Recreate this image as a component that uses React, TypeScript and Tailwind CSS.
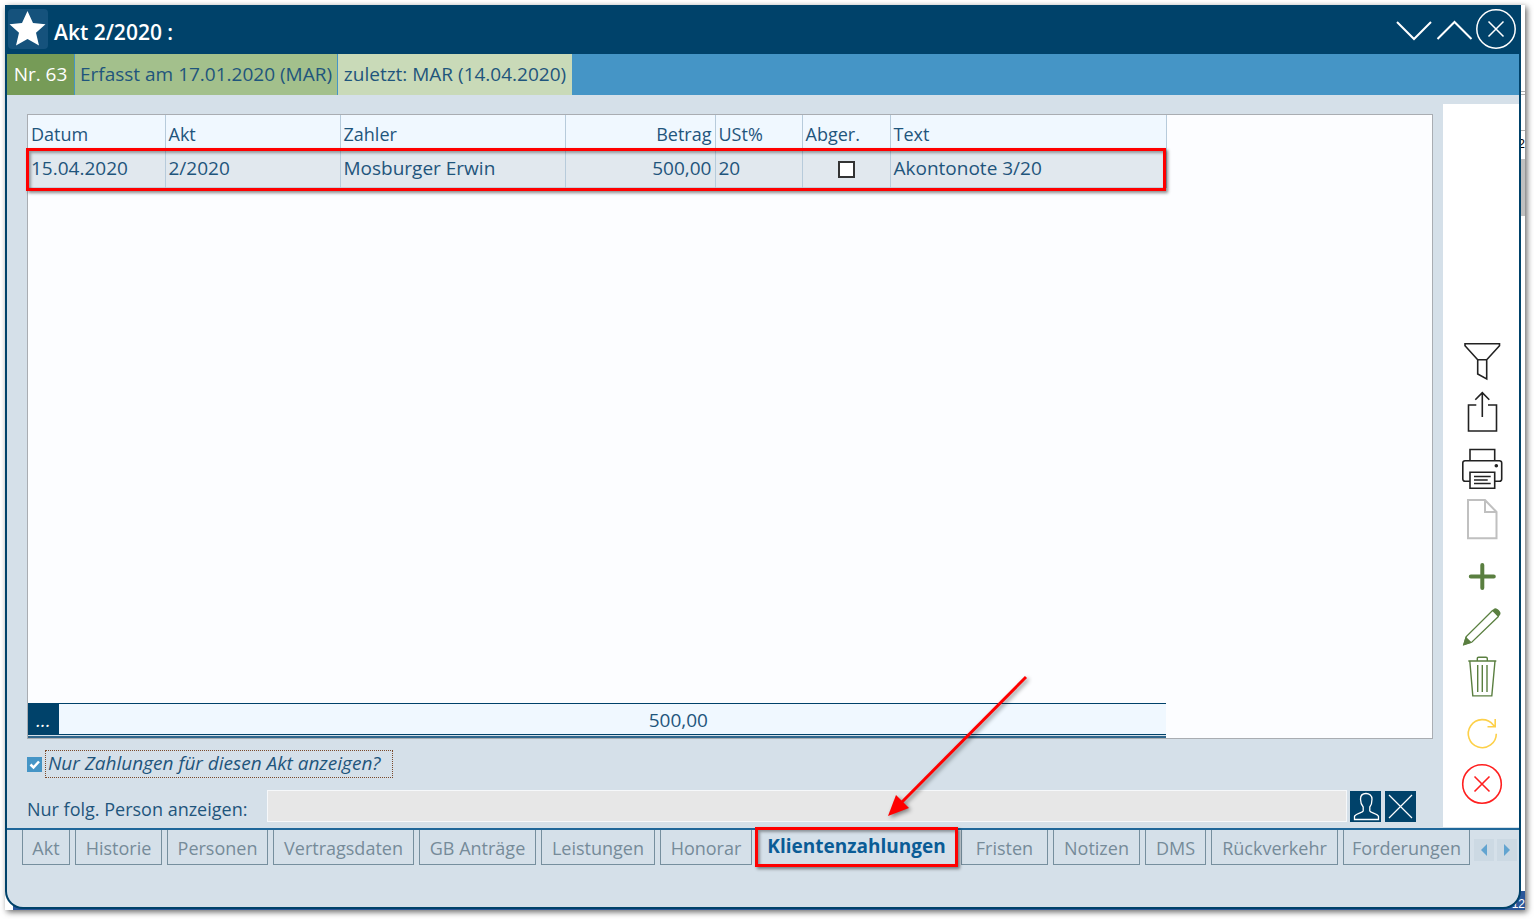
/**
 * Fenster "Akt" mit dem Register Klientenzahlungen
 *
 * Aufbau:
 * - Titelleiste und Infoleiste
 * - Tabelle der Zahlungen mit Summenzeile
 * - Filter (nur dieser Akt / nur folgende Person)
 * - Symbolleiste rechts und Register unten
 */

import React from 'react';

interface IconProps {
  className?: string;
  children: React.ReactNode;
}

// Gemeinsamer Rahmen für alle Symbole der rechten Leiste
const ToolIcon: React.FC<IconProps> = ({ className, children }) => (
  <svg
    viewBox="0 0 40 40"
    fill="none"
    stroke="currentColor"
    strokeWidth="1.6"
    className={`size-10 overflow-visible ${className ?? ''}`}
  >
    {children}
  </svg>
);

interface Tool {
  label: string;
  color: string;
  icon: React.ReactNode;
}

const toolGroups: Tool[][] = [
  [
    {
      label: 'Filter',
      color: 'text-[#222222]',
      icon: <path d="M3 2.7h34.5v2L24.7 18.7V38l-9-5V18.7L3 4.7zM15.7 18.7h9" />,
    },
    {
      label: 'Exportieren',
      color: 'text-[#222222]',
      icon: <path d="M14.3 14H6.5v26h28V14H26M20.3 26V2M13.3 8.7l7-7 7 7" />,
    },
  ],
  [
    {
      label: 'Drucken',
      color: 'text-[#222222]',
      icon: (
        <>
          <path d="M8 11.7V.5h24.7v11.2M8 32.3H3a2.2 2.2 0 0 1-2.2-2.2V14A2.2 2.2 0 0 1 3 11.7h34.5a2.2 2.2 0 0 1 2.2 2.3v16a2.2 2.2 0 0 1-2.2 2.3h-4.8M8 23.3h24.7v16H8z" />
          <path d="M12 27.5h16.7M12 31h13.7M12 34.5h16.7" />
          <circle cx="34.3" cy="16.7" r="1" fill="currentColor" />
        </>
      ),
    },
    {
      label: 'Neues Dokument',
      color: 'text-[#c0c0c0]',
      icon: <path strokeWidth="2" d="M6 1h17l11.5 12v26.2H6zM23 1v12h11.5" />,
    },
  ],
  [
    {
      label: 'Neu',
      color: 'text-[#5a7f40]',
      icon: <path strokeWidth="4" strokeLinecap="round" d="M20.3 8v23M8.8 19.5h23" />,
    },
    {
      label: 'Bearbeiten',
      color: 'text-[#5a7f40]',
      icon: (
        <>
          <path strokeWidth="1.3" d="M30.8 3.3 4.3 29.5 2 37.3l8-2.3L36.7 9.2" />
          <path fill="currentColor" d="m4 31-2 6.5 6.5-2zM32.2 2.5c1.8-1.8 7 2.7 5 5.3l-1 1-5.2-5.2z" />
        </>
      ),
    },
    {
      label: 'Löschen',
      color: 'text-[#5a7f40]',
      icon: (
        <path
          strokeWidth="1.4"
          d="M6.3 4h28M15.3 4V1.5q0-1.3 1.3-1.3h7.4q1.3 0 1.3 1.3V4M7.8 4l3 34.9h19L33 4M15.7 8v27M20.3 8v27M25 8v27"
        />
      ),
    },
  ],
  [
    {
      label: 'Aktualisieren',
      color: 'text-[#fdd049]',
      icon: <path d="M34.3 18.7a14 14 0 1 1-3-8.7l1.5 1.7M33.2 4v7.7h-7.7" />,
    },
    {
      label: 'Schließen',
      color: 'text-[#ff2020]',
      icon: (
        <>
          <circle cx="20" cy="19" r="19.3" />
          <path d="m12.5 11.5 15 15m0-15-15 15" />
        </>
      ),
    },
  ],
];

// Register mit ihrer Breite
const tabs = [
  { name: 'Akt', width: 'w-12' },
  { name: 'Historie', width: 'w-[87px]' },
  { name: 'Personen', width: 'w-[101px]' },
  { name: 'Vertragsdaten', width: 'w-[141px]' },
  { name: 'GB Anträge', width: 'w-[117px]' },
  { name: 'Leistungen', width: 'w-[114px]' },
  { name: 'Honorar', width: 'w-[92px]' },
  { name: 'Klientenzahlungen', width: 'w-[203px]' },
  { name: 'Fristen', width: 'w-[87px]' },
  { name: 'Notizen', width: 'w-[87px]' },
  { name: 'DMS', width: 'w-[61px]' },
  { name: 'Rückverkehr', width: 'w-[127px]' },
  { name: 'Forderungen', width: 'w-[127px]' },
];

/** Titelleiste mit Stern und Fensterknöpfen */
const TitleBar = () => (
  <header className="flex h-[49px] shrink-0 items-center bg-[#00426a] pb-px pl-[3px] pr-[5px] text-white">
    <button aria-label="Favorit" className="size-10 rounded bg-[#15527c]">
      <svg viewBox="0 0 40 40" className="size-10" fill="currentColor">
        <path d="m19.500 2 5.500 12 12.500 1.200-9.500 8.600L31 36.500 19.500 30 8 36.500l3-12.700L1.500 15.200 14 14z" />
      </svg>
    </button>
    <h1 className="ml-1.5 mt-2 text-[21px] font-semibold">Akt 2/2020 :</h1>
    <div className="ml-auto flex items-center gap-[3px]">
      <button aria-label="Nächster Akt">
        <svg viewBox="0 0 37 40" className="h-10 w-[37px]" fill="none" stroke="currentColor" strokeWidth="2">
          <path d="m1 13 17 17 17-17" />
        </svg>
      </button>
      <button aria-label="Vorheriger Akt">
        <svg viewBox="0 0 37 40" className="h-10 w-[37px]" fill="none" stroke="currentColor" strokeWidth="2">
          <path d="m1.500 30 17-17 17 17" />
        </svg>
      </button>
      <button aria-label="Fenster schließen">
        <svg viewBox="0 0 40 40" className="size-10" fill="none" stroke="currentColor" strokeWidth="1.500">
          <circle cx="20" cy="20" r="19.200" />
          <path d="m12.500 12.500 15 15m0-15-15 15" />
        </svg>
      </button>
    </div>
  </header>
);

/** Nummer, Erfassung und letzte Änderung */
const InfoBar = () => (
  <div className="flex h-[41px] shrink-0 gap-px bg-[#4595c6] leading-10">
    <span className="w-[67px] bg-[#769b57] text-center text-white">Nr. 63</span>
    <span className="w-[262px] bg-[#a3c08c] text-center">Erfasst am 17.01.2020 (MAR)</span>
    <span className="w-[234px] bg-[#c9dab8] text-center">zuletzt: MAR (14.04.2020)</span>
  </div>
);

const PaymentsTable = () => (
  <div className="relative">
    <table className="w-[1138px] table-fixed border-collapse text-left leading-6">
      <colgroup>
        <col className="w-[137px]" />
        <col className="w-[175px]" />
        <col className="w-[225px]" />
        <col className="w-[150px]" />
        <col className="w-[87px]" />
        <col className="w-[88px]" />
        <col className="w-[276px]" />
      </colgroup>
      <thead>
        <tr className="h-9 bg-[#f0f8ff] text-lg/6 [&>th]:border-r [&>th]:border-[#b7cbdb] [&>th]:px-[3px] [&>th]:pt-0.5 [&>th]:font-normal">
          <th>Datum</th>
          <th>Akt</th>
          <th>Zahler</th>
          <th className="text-right">Betrag</th>
          <th>USt%</th>
          <th>Abger.</th>
          <th>Text</th>
        </tr>
      </thead>
      <tbody>
        <tr className="h-9 border-b border-[#c3d3df] bg-[#e1e8ee] [&>td]:border-r [&>td]:border-[#b7cbdb] [&>td]:px-[3px] [&>td]:pb-0.5">
          <td>15.04.2020</td>
          <td>2/2020</td>
          <td>Mosburger Erwin</td>
          <td className="text-right">500,00</td>
          <td>20</td>
          <td>
            <input
              type="checkbox"
              aria-label="Abgerechnet"
              className="mx-auto mt-1 block size-[17px] appearance-none border-2 border-[#333333] bg-white"
            />
          </td>
          <td>Akontonote 3/20</td>
        </tr>
      </tbody>
    </table>
    {/* Markierung um die Zahlungszeile */}
    <div className="pointer-events-none absolute -left-0.5 top-[33px] h-[43px] w-[1140px] border-3 border-[#ff0000] shadow-[2px_2px_3px_rgba(0,0,0,0.45),inset_2px_2px_3px_rgba(0,0,0,0.35)]" />
  </div>
);

/** Summenzeile am unteren Rand der Tabelle */
const SumRow = () => (
  <div className="mt-auto w-[1138px] border-b-2 border-[#31678c] bg-[#d5e0e9] pb-px">
    <div className="flex h-8 border-y border-[#00426a] bg-[#f0f8ff] leading-8">
      <button className="w-[31px] bg-[#00426a] italic text-white">...</button>
      <output className="w-[649px] text-right">500,00</output>
    </div>
  </div>
);

const Filters = () => (
  <>
    <div className="mt-[11px] flex h-7 items-center gap-[3px]">
      <input id="nur-akt" type="checkbox" defaultChecked className="peer sr-only" />
      <label htmlFor="nur-akt" className="flex size-[15px] items-center justify-center bg-[#4595c6] text-white">
        <svg viewBox="0 0 15 15" className="size-[15px]" fill="none" stroke="currentColor" strokeWidth="2.500">
          <path d="m3.500 7.500 3 3 5.500-6" />
        </svg>
      </label>
      <label htmlFor="nur-akt" className="h-7 w-[348px] border border-dotted border-[#7b4a2a] pl-0.5 italic leading-6">
        Nur Zahlungen für diesen Akt anzeigen?
      </label>
    </div>
    <div className="mb-1.5 mt-3 flex items-center pr-[17px]">
      <label htmlFor="person" className="w-60 pt-1.5 text-lg/6">
        Nur folg. Person anzeigen:
      </label>
      <input id="person" type="text" className="h-8 min-w-0 flex-1 border border-[#f6f8fa] bg-[#e7e7e7]" />
      <button aria-label="Person wählen" className="ml-[3px] size-[31px] bg-[#00426a] text-white">
        <svg viewBox="0 0 31 31" className="size-[31px]" fill="none" stroke="currentColor" strokeWidth="1.300">
          <path d="M16 2.500c-3.500 0-5.500 2.300-5.500 5.700 0 3 .8 5.500 2.700 7.800v4c-1 2-8 2.500-8.700 5.500v3h24v-3c-1-3-7.700-3.500-8.700-5.500v-4c1.900-2.300 2.200-4.800 2.200-7.800 0-3.400-2.500-5.700-6-5.700z" />
        </svg>
      </button>
      <button aria-label="Person entfernen" className="ml-1 size-[31px] bg-[#00426a] text-white">
        <svg viewBox="0 0 31 31" className="size-[31px]" stroke="currentColor" strokeWidth="1.200">
          <path d="m4 4 23 23M27 4 4 27" />
        </svg>
      </button>
    </div>
  </>
);

const TabBar = () => (
  <nav className="flex h-[79px] shrink-0 items-start gap-[5px] border-t-2 border-[#1f679a] pl-[15px] pr-1 text-lg text-[#768b99]">
    {tabs.map(({ name, width }) =>
      name === 'Klientenzahlungen' ? (
        <div key={name} className="relative -mx-0.5 -mt-[3px]">
          <button
            className={`h-10 border-3 border-[#ff0000] text-[19px] font-bold text-[#0a5c96] shadow-[2px_2px_3px_rgba(0,0,0,0.45),inset_2px_2px_3px_rgba(0,0,0,0.35)] ${width}`}
          >
            {name}
          </button>
          {/* Pfeil auf das aktive Register */}
          <svg
            viewBox="0 0 140 142"
            className="pointer-events-none absolute bottom-full left-[133px] mb-2.5 h-[142px] w-[140px] overflow-visible drop-shadow-[2px_2px_2px_rgba(0,0,0,0.45)]"
          >
            <path d="M138 2 14 127" stroke="#ff0000" strokeWidth="3" />
            <path d="M0 141 8 120l13 13z" fill="#ff0000" />
          </svg>
        </div>
      ) : (
        <button
          key={name}
          className={`h-[35px] shrink-0 whitespace-nowrap border border-t-0 border-[#768f9e] pt-0.5 ${width}`}
        >
          {name}
        </button>
      ),
    )}
    <div className="-ml-px mt-[9px] flex gap-[3px] text-[#62a4d0]">
      <button aria-label="Register zurück" className="bg-[#ccd9e3]">
        <svg viewBox="0 0 20 22" className="h-[22px] w-5" fill="currentColor">
          <path d="M13 5v12l-6-6z" />
        </svg>
      </button>
      <button aria-label="Register weiter" className="bg-[#ccd9e3]">
        <svg viewBox="0 0 20 22" className="h-[22px] w-5" fill="currentColor">
          <path d="M7 5v12l6-6z" />
        </svg>
      </button>
    </div>
  </nav>
);

const App: React.FC = () => (
  <div className="h-screen bg-white pb-[9px] pl-[5px] pr-[9px] pt-[5px] font-['Open_Sans','Noto_Sans',sans-serif] text-[19px] text-[#1f557c]">
    <div className="relative h-full bg-white pb-px pr-1 shadow-[2px_2px_6px_rgba(0,0,0,0.6)]">
      {/* Teile der Anwendung, die hinter dem Fenster hervorschauen */}
      <div className="absolute inset-0 overflow-hidden font-['Liberation_Sans',sans-serif] text-xs leading-3 text-black">
        <div className="absolute right-0 top-[86px] h-1 w-1 border-y border-[#b0b0b0]" />
        <div className="absolute right-0 top-[125px] h-px w-1 bg-[#b0b0b0]" />
        <span className="absolute right-0 top-[133px]">2</span>
        <div className="absolute right-0 top-[154px] h-[57px] w-1 bg-[#c0c0c0]" />
        <div className="absolute bottom-0 left-2 right-0 h-[19px] bg-[#2b579a]" />
        <span className="absolute bottom-0 right-0 text-white">12</span>
      </div>

      <div className="relative flex h-full flex-col overflow-hidden rounded-b-[18px] bg-[#00426a]">
        <TitleBar />
        <div className="mx-0.5 mb-0.5 flex min-h-0 flex-1 flex-col overflow-hidden rounded-b-2xl bg-[#d5e0e9]">
          <InfoBar />
          <div className="flex min-h-0 flex-1">
            <main className="flex min-w-0 flex-1 flex-col pl-5 pr-[10px] pt-[19px]">
              <div className="flex min-h-0 flex-1 flex-col border border-[#a9adb2] bg-[#fcfdff]">
                <PaymentsTable />
                <SumRow />
              </div>
              <Filters />
            </main>
            <aside className="mb-px mt-[9px] flex w-19 flex-col items-center justify-end gap-[18px] bg-white pb-[22px] pl-0.5">
              {toolGroups.map((group) => (
                <div key={group[0].label} className="flex flex-col gap-2.5">
                  {group.map((tool) => (
                    <button key={tool.label} aria-label={tool.label}>
                      <ToolIcon className={tool.color}>{tool.icon}</ToolIcon>
                    </button>
                  ))}
                </div>
              ))}
            </aside>
          </div>
          <TabBar />
        </div>
      </div>
    </div>
  </div>
);

export default App;
